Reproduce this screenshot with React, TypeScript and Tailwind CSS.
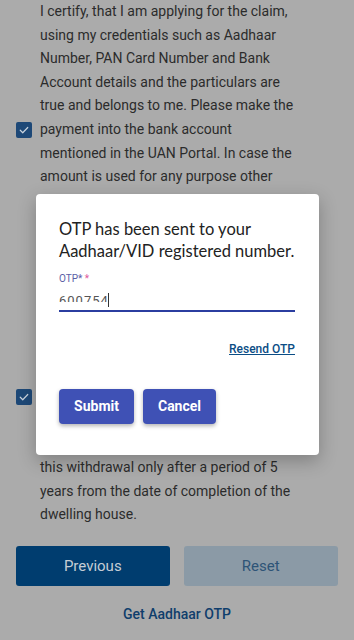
import React from "react";

function Check() {
  return (
    <div className="w-4 h-4 rounded-[2px] bg-[#1d4877] flex items-center justify-center shrink-0">
      <svg width="12" height="12" viewBox="0 0 24 24" fill="none">
        <path d="M4.5 12.5l5 5L19.5 7" stroke="#c9d3dd" strokeWidth="2.4" strokeLinecap="round" strokeLinejoin="round" />
      </svg>
    </div>
  );
}

function Para({ lines }: { lines: string[] }) {
  return (
    <div className="flex items-center gap-2 pl-4 pr-3">
      <Check />
      <div className="text-[14px] leading-[23.6px] text-[#2b2b2b]">
        {lines.map((l, i) => (
          <div key={i} className="whitespace-nowrap">{l}</div>
        ))}
      </div>
    </div>
  );
}

export default function App() {
  const p1 = [
    "I certify, that I am applying for the claim,",
    "using my credentials such as Aadhaar",
    "Number, PAN Card Number and Bank",
    "Account details and the particulars are",
    "true and belongs to me. Please make the",
    "payment into the bank account",
    "mentioned in the UAN Portal. In case the",
    "amount is used for any purpose other",
    "than for which it has been applied, I",
    "will be liable for penal action as per",
    "the scheme provisions.",
  ];
  const p2 = [
    "I certify that the dwelling house is",
    "being purchased / constructed for my",
    "own use and I will not sell or transfer",
    "the dwelling house in any manner. I",
    "also certify that I have not availed",
    "any advance earlier for this purpose",
    "and I understand that I can be",
    "eligible for another advance under",
    "this withdrawal only after a period of 5",
    "years from the date of completion of the",
    "dwelling house.",
  ];
  return (
    <div
      className="relative w-[354px] h-[640px] overflow-hidden bg-[#ababab]"
      style={{ fontFamily: "Roboto, 'Liberation Sans', sans-serif" }}
    >
      <div className="flex flex-col">
        <Para lines={p1} />
        <div className="h-[8px]" />
        <Para lines={p2} />
        <div className="flex gap-[14px] px-4 mt-[19px]">
          <div className="w-[154px] h-[40px] rounded-[3px] bg-[#003d6f] text-[#c5cdd5] text-[15px] flex items-center justify-center">
            Previous
          </div>
          <div className="w-[155px] h-[40px] rounded-[3px] bg-[#8b9aa6] text-[#2e5477] text-[15px] flex items-center justify-center">
            Reset
          </div>
        </div>
        <div className="mt-[18px] text-center text-[14px] font-medium text-[#0f3e6c]">Get Aadhaar OTP</div>
      </div>

      <div className="absolute left-[36px] top-[194px] w-[283px] h-[261px] bg-white rounded-[4px] shadow-[0_6px_18px_rgba(0,0,0,0.25)] pl-[23px] pr-[20px] pt-[24px]">
        <div
          className="text-[16.5px] leading-[22px] text-[#222] whitespace-nowrap"
          style={{ fontFamily: "Lato, 'Open Sans', sans-serif" }}
        >
          OTP has been sent to your
          <br />
          Aadhaar/VID registered number.
        </div>
        <div className="mt-[11px] text-[10px] leading-[12px] text-[#5b5ea6]">
          OTP* <span className="text-[#e0589a]">*</span>
        </div>
        <div className="relative w-[236px] h-[27px] border-b-2 border-[#2b3ea0]">
          <div className="absolute left-0 top-[9px] h-[8px] overflow-hidden">
            <div className="text-[13px] leading-[14px] tracking-[1px] text-[#555]">600754</div>
          </div>
          <div className="absolute left-[49px] top-[8px] w-px h-[14px] bg-[#333]" />
        </div>
        <div className="flex w-[236px] justify-end mt-[28px]">
          <span className="text-[12px] font-medium underline text-[#0b4d85]">Resend OTP</span>
        </div>
        <div className="flex gap-[9px] mt-[31px]">
          <div className="w-[75px] h-[35px] rounded-[4px] bg-[#3f51b5] shadow-[0_2px_4px_rgba(0,0,0,0.3)] text-white text-[14px] font-bold flex items-center justify-center">
            Submit
          </div>
          <div className="w-[73px] h-[35px] rounded-[4px] bg-[#3f51b5] shadow-[0_2px_4px_rgba(0,0,0,0.3)] text-white text-[14px] font-bold flex items-center justify-center">
            Cancel
          </div>
        </div>
      </div>
    </div>
  );
}
